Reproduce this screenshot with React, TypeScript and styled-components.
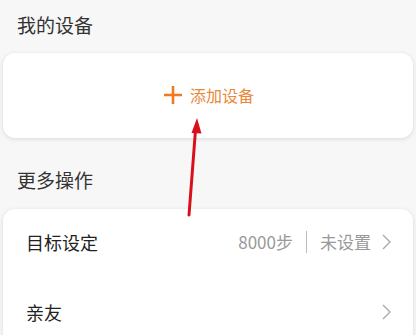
import * as React from 'react'
import styled, { createGlobalStyle } from 'styled-components'

const GlobalStyle = createGlobalStyle`
  html, body {
    margin: 0;
    padding: 0;
    background: #f7f7f7;
    font-family: "Noto Sans CJK SC", "Noto Sans", sans-serif;
  }
  * { box-sizing: border-box; }
`

const Page = styled.div`
  position: relative;
  width: 416px;
  height: 335px;
  overflow: hidden;
  padding: 0 3px;
  background: #f7f7f7;
`

const SectionTitle = styled.div<{ $height: number; $top: number }>`
  height: ${p => p.$height}px;
  padding: ${p => p.$top}px 0 0 14px;
  font-size: 19px;
  line-height: 22px;
  color: #333;
  overflow: hidden;
`

const Card = styled.div`
  background: #fff;
  border-radius: 12px;
  box-shadow: 0 1px 4px rgba(0, 0, 0, 0.13);
`

const AddButton = styled.div`
  height: 85px;
  display: flex;
  align-items: center;
  justify-content: center;
  gap: 8px;
  padding: 0 0 1px 2px;
  color: #e8893a;
  font-size: 16px;
  line-height: 20px;
`

const Row = styled.div`
  height: 70px;
  display: flex;
  align-items: center;
  padding: 0 22px 4px 23px;
  line-height: 22px;
`

const Label = styled.div`
  flex: 1;
  font-size: 18px;
  color: #222;
`

const Value = styled.span`
  font-size: 17px;
  color: #999;
`

const Divider = styled.span`
  width: 1px;
  height: 22px;
  background: #bbb;
  margin: 0 13px;
`

const Chevron = styled.svg`
  margin-left: 11px;
  flex: none;
`

const Arrow = styled.svg`
  position: absolute;
  left: 0;
  top: 0;
  pointer-events: none;
`

const Plus = () => (
  <svg width="18" height="18" viewBox="0 0 18 18">
    <path d="M9 0v18M0 9h18" stroke="#f07a22" strokeWidth="2.6" />
  </svg>
)

const Next = () => (
  <Chevron width="9" height="16" viewBox="0 0 9 16">
    <path d="M1 1l7 7-7 7" fill="none" stroke="#aaa" strokeWidth="1.4" />
  </Chevron>
)

export default function App() {
  return (
    <Page>
      <GlobalStyle />
      <SectionTitle $height={53} $top={14}>我的设备</SectionTitle>
      <Card>
        <AddButton>
          <Plus />
          <span>添加设备</span>
        </AddButton>
      </Card>
      <SectionTitle $height={71} $top={31}>更多操作</SectionTitle>
      <Card>
        <Row>
          <Label>目标设定</Label>
          <Value>8000步</Value>
          <Divider />
          <Value>未设置</Value>
          <Next />
        </Row>
        <Row>
          <Label>亲友</Label>
          <Next />
        </Row>
      </Card>
      <Arrow width="416" height="335" viewBox="0 0 416 335">
        <line x1="189" y1="215" x2="195.5" y2="130" stroke="#d8101c" strokeWidth="3" strokeLinecap="round" />
        <polygon points="197,118 191.5,133 201.5,133.5" fill="#d8101c" />
      </Arrow>
    </Page>
  )
}
